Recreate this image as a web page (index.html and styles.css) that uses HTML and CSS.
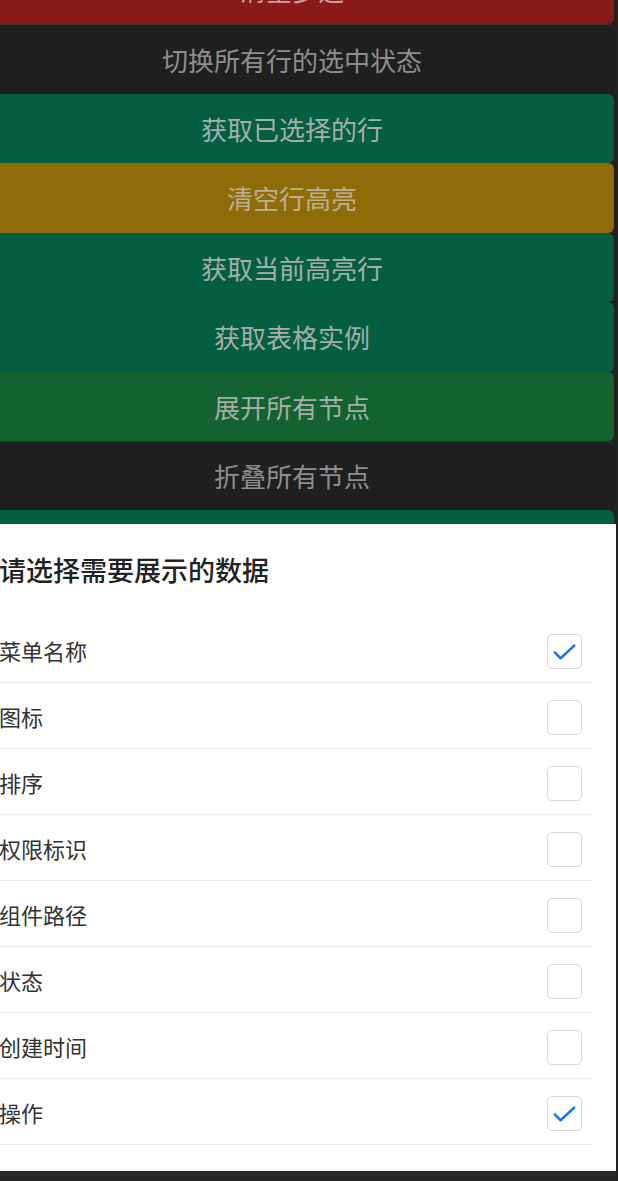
FILE: index.html
```html
<!DOCTYPE html>
<html lang="zh-CN">
<head>
    <meta charset="utf-8">
    <title>表格操作</title>
    <link rel="stylesheet" href="styles.css">
</head>

<body>

    <div class="page">
        <div class="actions">
            <button class="action red">清空多选</button>
            <button class="action dark">切换所有行的选中状态</button>
            <button class="action teal">获取已选择的行</button>
            <button class="action gold">清空行高亮</button>
            <button class="action teal">获取当前高亮行</button>
            <button class="action teal">获取表格实例</button>
            <button class="action green">展开所有节点</button>
            <button class="action dark">折叠所有节点</button>
            <button class="action teal"></button>
        </div>

        <div class="sheet">
            <h2 class="sheet-title">请选择需要展示的数据</h2>

            <ul class="column-list">
                <li class="column-item">
                    <span>菜单名称</span>
                    <span class="check checked"><svg viewBox="0 0 34 34"><path d="M7 18 L13 24 L27 11"/></svg></span>
                </li>
                <li class="column-item">
                    <span>图标</span>
                    <span class="check"></span>
                </li>
                <li class="column-item">
                    <span>排序</span>
                    <span class="check"></span>
                </li>
                <li class="column-item">
                    <span>权限标识</span>
                    <span class="check"></span>
                </li>
                <li class="column-item">
                    <span>组件路径</span>
                    <span class="check"></span>
                </li>
                <li class="column-item">
                    <span>状态</span>
                    <span class="check"></span>
                </li>
                <li class="column-item">
                    <span>创建时间</span>
                    <span class="check"></span>
                </li>
                <li class="column-item">
                    <span>操作</span>
                    <span class="check checked"><svg viewBox="0 0 34 34"><path d="M7 18 L13 24 L27 11"/></svg></span>
                </li>
            </ul>
        </div>

        <div class="bottom-bar"></div>
    </div>

</body>
</html>
```

FILE: styles.css
```css
body {
    margin: 0;
    background-color: #212121;
    font-family: 'Noto Sans CJK SC', 'Noto Sans', sans-serif;
    overflow: hidden;
}

.page {
    width: 646px;
    margin-left: -30px;
}

.actions {
    margin-top: -45px;
    height: 569px;
    overflow: hidden;
    padding-right: 2px;
}

.action {
    display: block;
    width: 100%;
    height: 69.43px;
    border: none;
    border-radius: 6px;
    font-family: inherit;
    font-size: 26px;
    padding: 0;
    text-align: center;
}

.red {
    background-color: #8a1a19;
    color: #c9a09f;
}

.dark {
    background-color: #1f1f1f;
    color: #8e8e8e;
    box-shadow: inset 0 1px 0 #3a3334;
}

.teal {
    background-color: #035e42;
    color: #a6aeaa;
}

.gold {
    background-color: #8f6c07;
    color: #bdb092;
}

.green {
    background-color: #12632f;
    color: #a6aea8;
}

.sheet {
    background-color: #fff;
    padding: 27px 24px 26px 29px;
}

.sheet-title {
    margin: 0 0 28px;
    font-size: 27px;
    line-height: 38px;
    font-weight: 500;
    color: #222;
}

.column-list {
    list-style: none;
    margin: 0;
    padding: 0;
}

.column-item {
    display: flex;
    align-items: center;
    justify-content: space-between;
    height: 65px;
    border-bottom: 1px solid #e9e9e9;
    font-size: 22px;
    color: #333;
}

.check {
    width: 33px;
    height: 33px;
    margin-top: 4px;
    margin-right: 10px;
    border: 1px solid #d9d9d9;
    border-radius: 5px;
    display: flex;
}

.check svg {
    width: 100%;
    height: 100%;
}

.check path {
    fill: none;
    stroke: #1677e8;
    stroke-width: 2.6;
    stroke-linecap: round;
    stroke-linejoin: round;
}

.bottom-bar {
    height: 10px;
    background-color: #262626;
}
```
